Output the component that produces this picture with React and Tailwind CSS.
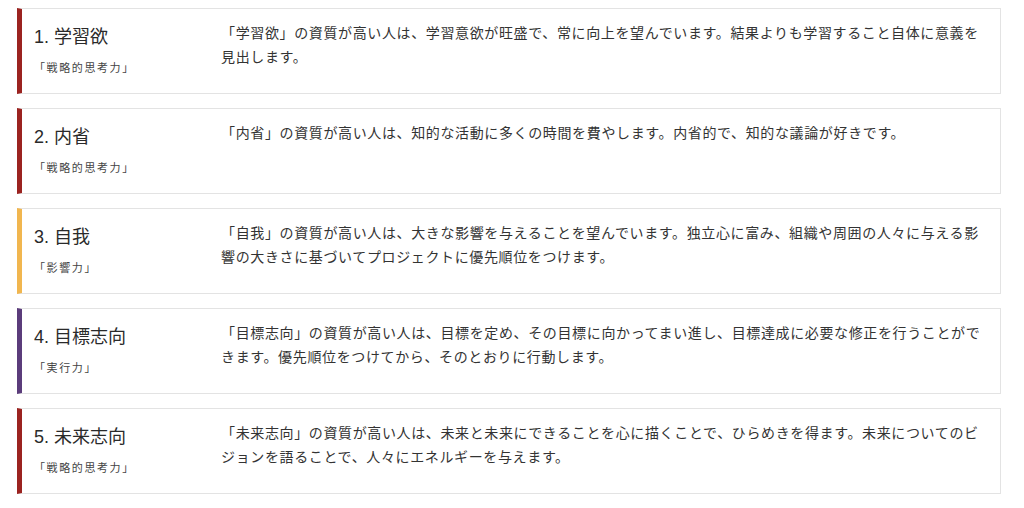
const items = [
  {
    n: 1,
    title: "学習欲",
    cat: "「戦略的思考力」",
    color: "border-l-[#9b2320]",
    desc: "「学習欲」の資質が高い人は、学習意欲が旺盛で、常に向上を望んでいます。結果よりも学習すること自体に意義を見出します。",
  },
  {
    n: 2,
    title: "内省",
    cat: "「戦略的思考力」",
    color: "border-l-[#9b2320]",
    desc: "「内省」の資質が高い人は、知的な活動に多くの時間を費やします。内省的で、知的な議論が好きです。",
  },
  {
    n: 3,
    title: "自我",
    cat: "「影響力」",
    color: "border-l-[#f1b64f]",
    desc: "「自我」の資質が高い人は、大きな影響を与えることを望んでいます。独立心に富み、組織や周囲の人々に与える影響の大きさに基づいてプロジェクトに優先順位をつけます。",
  },
  {
    n: 4,
    title: "目標志向",
    cat: "「実行力」",
    color: "border-l-[#5b3c7b]",
    desc: "「目標志向」の資質が高い人は、目標を定め、その目標に向かってまい進し、目標達成に必要な修正を行うことができます。優先順位をつけてから、そのとおりに行動します。",
  },
  {
    n: 5,
    title: "未来志向",
    cat: "「戦略的思考力」",
    color: "border-l-[#9b2320]",
    desc: "「未来志向」の資質が高い人は、未来と未来にできることを心に描くことで、ひらめきを得ます。未来についてのビジョンを語ることで、人々にエネルギーを与えます。",
  },
];

export default function App() {
  return (
    <div
      className="w-[1024px] h-[508px] bg-white pt-[8px] pl-[17px] pr-[23px] flex flex-col gap-[14px] text-[#333]"
      style={{ fontFamily: '"Noto Sans CJK JP", "Noto Sans", sans-serif' }}
    >
      {items.map((it) => (
        <div
          key={it.n}
          className={`flex h-[86px] bg-white border border-[#e3e3e3] border-l-[5px] ${it.color}`}
        >
          <div className="w-[199px] shrink-0 pl-[12px] pt-[12px]">
            <div className="text-[18px] leading-[28px] text-[#2a2a2a]">
              <span style={{ fontFamily: '"Liberation Sans", sans-serif' }}>{it.n}. </span>
              {it.title}
            </div>
            <div className="mt-[8px] text-[11px] leading-[16px] tracking-[1.6px] text-[#444]">
              {it.cat}
            </div>
          </div>
          <div className="flex-1 pt-[11px] pr-[14px] text-[14px] leading-[24px] tracking-[0.63px] text-[#333]">
            {it.desc}
          </div>
        </div>
      ))}
    </div>
  );
}
